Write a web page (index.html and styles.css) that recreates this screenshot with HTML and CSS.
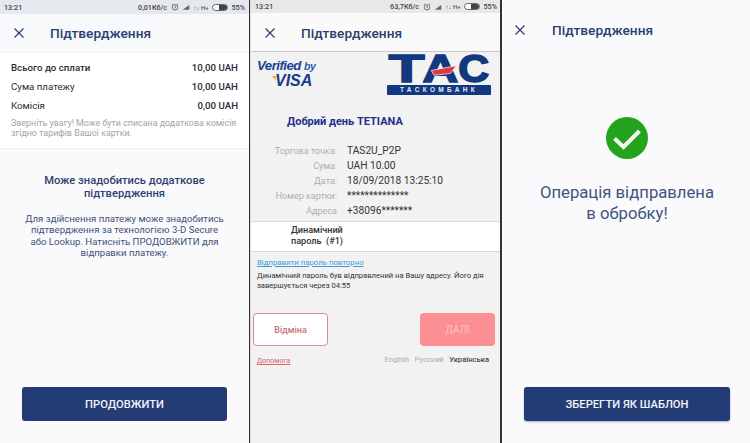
FILE: index.html
```html
<!DOCTYPE html>
<html lang="uk">
<head>
  <meta charset="UTF-8" />
  <title>Підтвердження</title>
  <link rel="stylesheet" href="styles.css">
</head>
<body>
  <div class="phones">

    <!-- Screen 1: summary -->
    <section class="phone phone-one">
      <div class="statusbar">
        <span class="time">13:21</span>
        <div class="status-right">
          <span>0,01Кб/с</span>
          <svg class="alarm" viewBox="0 0 10 10"><circle cx="5" cy="5.4" r="3.4"/><path d="M5 3.6V5.5L6.2 6.2M1 2.2L2.5 1M9 2.2L7.5 1"/></svg>
          <svg class="signal" viewBox="0 0 12 8"><path d="M1 8L11 1V8Z"/></svg>
          <span class="net">↑↓ H+</span>
          <span class="battery"><span class="battery-fill"></span></span>
          <span>55%</span>
        </div>
      </div>
      <header class="appbar">
        <svg class="close" viewBox="0 0 10 10"><path d="M.5 .5L9.5 9.5M9.5 .5L.5 9.5"/></svg>
        <h1>Підтвердження</h1>
      </header>
      <div class="summary">
        <div class="sum-row sum-total"><span>Всього до сплати</span><span>10,00 UAH</span></div>
        <div class="sum-row"><span>Сума платежу</span><span class="sum-value">10,00 UAH</span></div>
        <div class="sum-row"><span>Комісія</span><span class="sum-value">0,00 UAH</span></div>
        <p class="note">Зверніть увагу! Може бути списана додаткова комісія згідно тарифів Вашої картки.</p>
      </div>
      <div class="info">
        <h2>Може знадобитись додаткове підтвердження</h2>
        <p>Для здійснення платежу може знадобитись<br>підтвердження за технологією 3-D Secure<br>або Lookup. Натисніть ПРОДОВЖИТИ для<br>відправки платежу.</p>
      </div>
      <button class="primary">ПРОДОВЖИТИ</button>
    </section>

    <!-- Screen 2: 3-D Secure page -->
    <section class="phone phone-two">
      <div class="statusbar">
        <span class="time">13:21</span>
        <div class="status-right">
          <span>63,7Кб/с</span>
          <svg class="alarm" viewBox="0 0 10 10"><circle cx="5" cy="5.4" r="3.4"/><path d="M5 3.6V5.5L6.2 6.2M1 2.2L2.5 1M9 2.2L7.5 1"/></svg>
          <svg class="signal" viewBox="0 0 12 8"><path d="M1 8L11 1V8Z"/></svg>
          <span class="net">↑↓ H+</span>
          <span class="battery"><span class="battery-fill"></span></span>
          <span>55%</span>
        </div>
      </div>
      <header class="appbar">
        <svg class="close" viewBox="0 0 10 10"><path d="M.5 .5L9.5 9.5M9.5 .5L.5 9.5"/></svg>
        <h1>Підтвердження</h1>
      </header>
      <div class="logos">
        <div class="vbv">
          <span class="vbv-top">Verified <small>by</small></span>
          <span class="vbv-visa">VISA</span>
        </div>
        <div class="tas">
          <svg class="tas-mark" viewBox="0 0 104 30">
            <text x="0" y="28" textLength="37" lengthAdjust="spacingAndGlyphs">Т</text>
            <text x="35" y="28" textLength="37" lengthAdjust="spacingAndGlyphs">А</text>
            <text x="72" y="28" textLength="32" lengthAdjust="spacingAndGlyphs">С</text>
            <polygon class="tas-swoosh" points="44,16 70,11 64,19 47,21"/>
          </svg>
          <div class="tas-name">ТАСКОМБАНК</div>
        </div>
      </div>
      <div class="greeting">Добрий день TETIANA</div>
      <dl class="details">
        <div class="detail"><dt>Торгова точка:</dt><dd>TAS2U_P2P</dd></div>
        <div class="detail"><dt>Сума:</dt><dd>UAH 10.00</dd></div>
        <div class="detail"><dt>Дата:</dt><dd>18/09/2018 13:25:10</dd></div>
        <div class="detail"><dt>Номер картки:</dt><dd>**************</dd></div>
        <div class="detail"><dt>Адреса</dt><dd>+38096*******</dd></div>
      </dl>
      <div class="otp">Динамічний<br>пароль&nbsp; (#1)</div>
      <a class="resend" href="#">Відправити пароль повторно</a>
      <p class="otp-text">Динамічний пароль був відправлений на Вашу адресу. Його дія завершується через 04:55</p>
      <div class="otp-buttons">
        <button class="btn-cancel">Відміна</button>
        <button class="btn-next">ДАЛІ</button>
      </div>
      <div class="otp-foot">
        <a class="help" href="#">Допомога</a>
        <div class="langs"><span>English</span><span>Русский</span><span class="lang-on">Українська</span></div>
      </div>
    </section>

    <!-- Screen 3: done -->
    <section class="phone phone-three">
      <div class="statusbar statusbar-blank"></div>
      <header class="appbar">
        <svg class="close" viewBox="0 0 10 10"><path d="M.5 .5L9.5 9.5M9.5 .5L.5 9.5"/></svg>
        <h1>Підтвердження</h1>
      </header>
      <div class="done">
        <svg class="done-icon" viewBox="0 0 42 42"><circle cx="21" cy="21" r="21" fill="#23a31e"/><path d="M8.5 21.5L17.5 30L33.5 14" fill="none" stroke="#f4fbf3" stroke-width="4"/></svg>
        <p>Операція відправлена<br>в обробку!</p>
      </div>
      <button class="primary">ЗБЕРЕГТИ ЯК ШАБЛОН</button>
    </section>

  </div>
</body>
</html>
```

FILE: styles.css
```css
/* Base */
* { box-sizing: border-box; margin: 0; padding: 0; }
body {
  font-family: Roboto, "Noto Sans", sans-serif;
  background: #333;
  color: #2a3f6f;
  width: 750px;
  height: 443px;
  overflow: hidden;
}
.phones {
  display: flex;
  height: 443px;
}
.phone {
  display: flex;
  flex-direction: column;
  height: 443px;
  overflow: hidden;
  position: relative;
  background: #fafafc;
}
.phone-one { width: 249px; margin-right: 1px; }
.phone-two { width: 250px; margin-right: 2px; background: #f2f2f2; border-left: 1px solid #dcdcdc; }
.phone-three { width: 248px; }

/* Status bar */
.statusbar {
  height: 14px;
  background: #e6e8f0;
  display: flex;
  align-items: center;
  justify-content: space-between;
  padding: 0 4px;
  font-size: 7.2px;
  font-weight: 500;
  color: #444;
}
.phone-two .statusbar { background: #e8e8e8; height: 13px; padding-right: 3px; }
.statusbar-blank { background: #fafafc; }
.status-right {
  display: flex;
  align-items: center;
  gap: 3.5px;
}
.alarm {
  width: 8px;
  height: 8px;
  fill: none;
  stroke: #555;
  stroke-width: 1;
}
.signal { width: 8px; height: 6px; fill: #666; }
.net { font-size: 6px; color: #555; width: 15px; white-space: nowrap; }
.battery {
  display: block;
  width: 16px;
  height: 7px;
  border: 1px solid #666;
  border-radius: 4px;
  background: #fff;
  padding-left: 6px;
}
.battery-fill {
  display: block;
  height: 100%;
  background: #444;
  border-radius: 0 3px 3px 0;
}

/* App bar */
.appbar {
  height: 38px;
  display: flex;
  align-items: center;
  padding-left: 14px;
  background: #f8f9fb;
}
.phone-two .appbar {
  height: 39px;
  padding-top: 2px;
  background: #fafafa;
  border-bottom: 1px solid #c9c9c9;
}
.phone-three .appbar {
  height: 32px;
  padding-left: 13px;
  background: #fafafc;
}
.close {
  width: 10px;
  height: 10px;
  fill: none;
  stroke: #2a3f6f;
  stroke-width: 1.2;
  margin-right: 26px;
  flex-shrink: 0;
}
.phone-three .close { margin-right: 27px; }
.appbar h1 {
  font-size: 13.7px;
  font-weight: 500;
  color: #2a3f6f;
}

/* Screen 1 */
.summary {
  background: #fff;
  height: 97px;
  padding: 5px 11px 0;
  border-top: 1px solid #eef0f4;
  border-bottom: 1px solid #eef0f4;
  color: #2b2b33;
}
.sum-row {
  display: flex;
  justify-content: space-between;
  font-size: 9.7px;
  line-height: 19px;
}
.sum-total { font-weight: 500; }
.sum-value { font-weight: 500; }
.note {
  font-size: 8.9px;
  line-height: 10px;
  color: #a3a3a8;
  margin-top: 3px;
}
.info {
  text-align: center;
  padding: 25px 20px 0;
}
.info h2 {
  font-size: 11.2px;
  font-weight: 500;
  line-height: 13px;
  color: #2f4270;
}
.info p {
  font-size: 9.6px;
  line-height: 11.4px;
  color: #41517a;
  margin-top: 13px;
}
.primary {
  position: absolute;
  left: 22px;
  bottom: 22px;
  width: 205px;
  height: 34px;
  background: #243c76;
  border: none;
  border-radius: 3px;
  color: #f1f3f8;
  font-family: inherit;
  font-size: 11.2px;
  font-weight: 500;
}
.phone-three .primary { width: 206px; box-shadow: 0 1px 2px rgba(36,60,118,0.4); }

/* Screen 2 */
.logos {
  display: flex;
  justify-content: space-between;
  padding: 3px 9px 0 6px;
  height: 48px;
}
.vbv {
  display: flex;
  flex-direction: column;
  margin-top: 4px;
  font-style: italic;
  font-weight: 700;
  color: #1d3f94;
  font-family: "Liberation Sans", sans-serif;
}
.vbv-top { font-size: 13.2px; line-height: 13px; letter-spacing: -0.5px; }
.vbv-top small { font-size: 10.5px; color: #2f5aa8; }
.vbv-visa {
  display: flex;
  align-items: center;
  font-size: 16px;
  line-height: 16px;
  padding-left: 14px;
  color: #1a3a8c;
}
/* the gold tick on the V */
.vbv-visa::before {
  content: "";
  width: 0;
  height: 0;
  margin-right: -1px;
  margin-bottom: 6px;
  border-top: 4px solid #e8b04a;
  border-left: 5px solid transparent;
}
.tas { width: 104px; }
.tas-mark {
  display: block;
  width: 104px;
  height: 29px;
  overflow: visible;
  fill: #12387f;
  font-family: "Liberation Sans", sans-serif;
  font-weight: 700;
  font-size: 40px;
  stroke: #12387f;
  stroke-width: 1.6;
}
.tas-swoosh { fill: #e8343c; stroke: #f2f2f2; stroke-width: 0.8; }
.tas-name {
  height: 10px;
  margin-top: 1px;
  border-radius: 1px;
  background: #12387f;
  color: #e8ecf5;
  font-family: "Liberation Sans", sans-serif;
  font-size: 6.5px;
  font-weight: 700;
  line-height: 10px;
  letter-spacing: 3.3px;
  text-align: center;
}
.greeting {
  margin-top: 15px;
  padding-left: 36px;
  font-size: 11px;
  font-weight: 700;
  line-height: 14px;
  color: #1f2f8f;
}
.details { margin-top: 14px; }
.detail {
  display: flex;
  align-items: baseline;
  gap: 10px;
  height: 15px;
  line-height: 15px;
}
.detail dt {
  width: 86px;
  font-size: 9px;
  text-align: right;
  color: #aeaeae;
}
.detail dd { font-size: 10.2px; color: #333; }
.otp {
  height: 31px;
  margin-top: 3px;
  padding: 3px 0 0 40px;
  background: #fff;
  border-top: 1px solid #d8d8d8;
  border-bottom: 1px solid #d8d8d8;
  font-size: 9.1px;
  font-weight: 500;
  line-height: 11px;
  color: #333;
}
.resend {
  margin: 6px 0 0 6px;
  font-size: 7.8px;
  line-height: 10px;
  color: #3a9be0;
}
.otp-text {
  margin: 3px 6px 0;
  font-size: 7.6px;
  line-height: 10px;
  color: #333;
}
.otp-buttons {
  display: flex;
  justify-content: space-between;
  margin-top: 22px;
  padding: 0 5px 0 2px;
}
.otp-buttons button {
  width: 75px;
  height: 33px;
  border-radius: 4px;
  font-family: inherit;
  font-weight: 500;
}
.btn-cancel {
  background: #fff;
  border: 1.5px solid #d98a92;
  color: #d0707a;
  font-size: 9px;
}
.btn-next {
  background: #fb8f94;
  border: none;
  color: #fbb9bb;
  font-size: 10px;
}
.otp-foot {
  display: flex;
  justify-content: space-between;
  margin-top: 8px;
  padding: 0 11px 0 6px;
  line-height: 11px;
}
.help { color: #d9626e; margin-top: 2px; font-size: 7px; }
.langs { display: flex; gap: 5.5px; color: #aaa; font-size: 7.6px; }
.lang-on { color: #444; font-weight: 500; }

/* Screen 3 */
.done {
  display: flex;
  flex-direction: column;
  align-items: center;
  padding: 71px 0 0 2px;
}
.done-icon { width: 42px; height: 42px; }
.done p {
  margin-top: 23px;
  font-size: 16.7px;
  line-height: 21px;
  text-align: center;
  color: #42547f;
}
```
